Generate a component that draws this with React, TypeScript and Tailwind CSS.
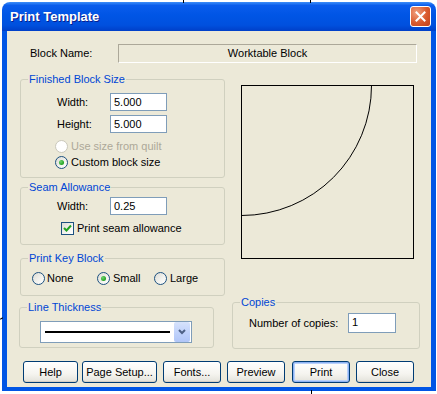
import React from 'react';

const font = "font-['Liberation_Sans',Arial,sans-serif] text-[11px] leading-[13px]";

const GroupBox: React.FC<{ title: string; className?: string; children?: React.ReactNode }> = ({ title, className, children }) => (
  <div className={`flex flex-col border border-[#D0D0BF] rounded-[3px] ${className ?? ''}`}>
    <span className="-mt-[7px] ml-[7px] px-[1px] w-fit bg-[#ECE9D8] text-[#0046D5] leading-[13px]">{title}</span>
    {children}
  </div>
);

const TextBox: React.FC<{ value: string; className?: string }> = ({ value, className }) => (
  <div className={`bg-white border border-[#7F9DB9] pl-[3px] pt-[1px] leading-[14px] ${className ?? ''}`}>{value}</div>
);

const Radio: React.FC<{ checked?: boolean; disabled?: boolean }> = ({ checked, disabled }) => (
  <span
    className={`flex items-center justify-center w-[13px] h-[13px] rounded-full border shrink-0 ${
      disabled ? 'border-[#CAC8BB] bg-white' : 'border-[#1C5180] bg-[linear-gradient(135deg,#DCDBD3_0%,#F4F4F0_60%,#FFFFFF_100%)]'
    }`}
  >
    {checked && <span className="w-[5px] h-[5px] rounded-full bg-[radial-gradient(circle_at_35%_35%,#6FD36F_0%,#21A121_70%)]" />}
  </span>
);

const Checkbox: React.FC = () => (
  <span className="flex items-center justify-center w-[13px] h-[13px] border border-[#1C5180] bg-[linear-gradient(135deg,#DCDBD3_0%,#F4F4F0_60%,#FFFFFF_100%)] shrink-0">
    <svg width="9" height="9" viewBox="0 0 9 9">
      <path d="M1 4 L3.5 6.5 L8 1.5" fill="none" stroke="#21A121" strokeWidth="2" />
    </svg>
  </span>
);

const XpButton: React.FC<{ label: string; primary?: boolean; className?: string }> = ({ label, primary, className }) => (
  <button
    type="button"
    className={`h-[22px] rounded-[3px] border border-[#003C74] bg-[linear-gradient(to_bottom,#FFFFFF_0%,#F5F4EF_60%,#E3E2DA_100%)] text-black ${
      primary ? 'shadow-[inset_0_0_0_1px_#8DB2F3,inset_0_0_0_2px_#B9D1FA]' : 'shadow-[inset_0_-1px_0_#D6D0C5]'
    } ${className ?? ''}`}
  >
    {label}
  </button>
);

const App: React.FC = () => {
  return (
    <div className={`relative w-[437px] h-[394px] bg-white pt-[2px] pl-[2px] ${font} text-black`}>
      {/* desktop bits behind the window */}
      <span className="absolute left-[183px] top-0 w-px h-[3px] bg-black" />
      <span className="absolute left-[310px] top-0 w-px h-[3px] bg-black" />
      <span className="absolute left-[311px] top-[390px] w-px h-[4px] bg-black" />
      <span className="absolute left-0 top-[318px] w-[3px] h-px bg-black rotate-[-30deg]" />

      <div className="w-[434px] h-[389px] flex flex-col rounded-t-[8px] overflow-hidden">
        {/* title bar */}
        <div className="h-[29px] shrink-0 flex items-center justify-between pl-[8px] pr-[5px] bg-[linear-gradient(to_bottom,#3D8EF8_0%,#0A5CEC_12%,#0055E5_45%,#0050DE_80%,#003FC8_100%)]">
          <span className="font-['Liberation_Sans',Arial,sans-serif] font-bold text-[13px] text-white [text-shadow:1px_1px_0_#0A1E8C]">
            Print Template
          </span>
          <span className="flex items-center justify-center w-[21px] h-[21px] rounded-[3px] border border-white bg-[radial-gradient(circle_at_30%_30%,#F0A080_0%,#DA5A2E_55%,#C0401A_100%)]">
            <svg width="11" height="11" viewBox="0 0 11 11">
              <path d="M1.5 1.5 L9.5 9.5 M9.5 1.5 L1.5 9.5" stroke="white" strokeWidth="2" strokeLinecap="square" />
            </svg>
          </span>
        </div>

        {/* body */}
        <div className="flex-1 flex flex-col bg-[#ECE9D8] border-x-[5px] border-b-[4px] border-[#0055E5]">
          {/* block name */}
          <div className="flex items-center mt-[13px] pl-[23px]">
            <span className="w-[88px]">Block Name:</span>
            <div className="w-[299px] h-[19px] flex items-center justify-center border border-t-[#ACA899] border-l-[#ACA899] border-b-white border-r-white">
              Worktable Block
            </div>
          </div>

          <div className="flex mt-[16px] pl-[13px]">
            {/* left column */}
            <div className="flex flex-col w-[205px]">
              <GroupBox title="Finished Block Size" className="h-[99px]">
                <div className="flex flex-col gap-[4px] mt-[7px] pl-[36px]">
                  <div className="flex items-center">
                    <span className="w-[53px]">Width:</span>
                    <TextBox value="5.000" className="w-[57px] h-[18px]" />
                  </div>
                  <div className="flex items-center">
                    <span className="w-[53px]">Height:</span>
                    <TextBox value="5.000" className="w-[57px] h-[18px]" />
                  </div>
                </div>
                <div className="flex flex-col mt-[5px] pl-[34px]">
                  <div className="flex items-center gap-[3px] h-[16px] text-[#ACA899]">
                    <Radio disabled />
                    <span>Use size from quilt</span>
                  </div>
                  <div className="flex items-center gap-[3px] h-[16px]">
                    <Radio checked />
                    <span>Custom block size</span>
                  </div>
                </div>
              </GroupBox>

              <GroupBox title="Seam Allowance" className="h-[58px] mt-[9px]">
                <div className="flex items-center mt-[3px] pl-[36px]">
                  <span className="w-[53px]">Width:</span>
                  <TextBox value="0.25" className="w-[57px] h-[18px]" />
                </div>
                <div className="flex items-center gap-[3px] mt-[7px] pl-[40px]">
                  <Checkbox />
                  <span>Print seam allowance</span>
                </div>
              </GroupBox>

              <GroupBox title="Print Key Block" className="h-[38px] mt-[13px]">
                <div className="flex items-center mt-[7px] pl-[11px]">
                  <div className="flex items-center gap-[2px] w-[65px]">
                    <Radio />
                    <span>None</span>
                  </div>
                  <div className="flex items-center gap-[3px] w-[57px]">
                    <Radio checked />
                    <span>Small</span>
                  </div>
                  <div className="flex items-center gap-[3px]">
                    <Radio />
                    <span>Large</span>
                  </div>
                </div>
              </GroupBox>

              <GroupBox title="Line Thickness" className="w-[195px] h-[41px] mt-[11px] -ml-px">
                <div className="flex items-center w-[152px] h-[22px] mt-[7px] ml-[20px] bg-white border border-[#7F9DB9]">
                  <div className="flex-1 flex items-center px-[4px]">
                    <span className="w-full h-[2px] bg-black" />
                  </div>
                  <span className="flex items-center justify-center w-[16px] h-[20px] mr-px rounded-[2px] bg-[linear-gradient(to_bottom,#D7E3FC_0%,#C1D3FB_50%,#B0C6F8_100%)]">
                    <svg width="8" height="6" viewBox="0 0 8 6">
                      <path d="M1 1 L4 4 L7 1" fill="none" stroke="#4D6185" strokeWidth="2" />
                    </svg>
                  </span>
                </div>
              </GroupBox>
            </div>

            {/* right column */}
            <div className="flex flex-col w-[188px] ml-[7px]">
              <svg width="173" height="174" viewBox="0 0 173 174" className="mt-[6px] ml-[9px]">
                <rect x="0.5" y="0.5" width="172" height="173" fill="none" stroke="black" />
                <path d="M130.5 0.5 A130 130 0 0 1 0.5 130.5" fill="none" stroke="black" />
              </svg>
              <GroupBox title="Copies" className="h-[47px] mt-[43px]">
                <div className="flex items-center mt-[4px] pl-[16px]">
                  <span className="w-[99px]">Number of copies:</span>
                  <TextBox value="1" className="w-[48px] h-[20px]" />
                </div>
              </GroupBox>
            </div>
          </div>

          {/* buttons */}
          <div className="flex mt-[12px] pl-[16px]">
            <XpButton label="Help" className="w-[55px]" />
            <XpButton label="Page Setup..." className="w-[75px] ml-[4px]" />
            <XpButton label="Fonts..." className="w-[58px] ml-[6px]" />
            <XpButton label="Preview" className="w-[58px] ml-[6px]" />
            <XpButton label="Print" primary className="w-[58px] ml-[7px]" />
            <XpButton label="Close" className="w-[58px] ml-[6px]" />
          </div>
        </div>
      </div>
    </div>
  );
};

export default App;
